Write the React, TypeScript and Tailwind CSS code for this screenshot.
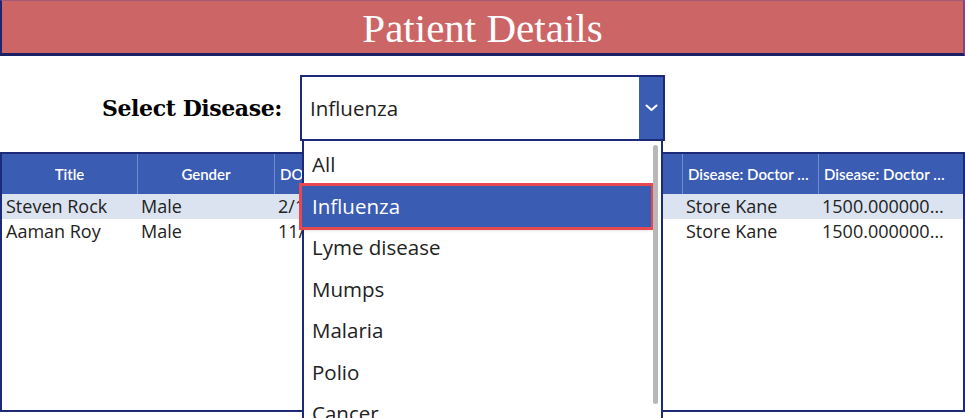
import React from "react";

const cols = ["Title", "Gender", "DOB", "Address", "Phone", "Disease: Doctor Name", "Disease: Doctor Fees", ""];
const rows = [
  ["Steven Rock", "Male", "2/14/1985", "New York", "555-0101", "Store Kane", "1500.000000000", ""],
  ["Aaman Roy", "Male", "11/3/1990", "Chicago", "555-0199", "Store Kane", "1500.000000000", ""],
];
const items = ["All", "Influenza", "Lyme disease", "Mumps", "Malaria", "Polio", "Cancer"];

export default function App() {
  return (
    <div className="relative w-[965px] h-[418px] overflow-hidden bg-white">
      <div className="h-[56px] bg-[#cc6666] border-l-2 border-r-2 border-b-[3px] border-t border-l-[#1d2470] border-r-[#7a4a7a] border-b-[#1b1f66] border-t-[#a25a78] flex items-center justify-center">
        <span className="text-white text-[41px] leading-none pt-[2px]" style={{ fontFamily: '"Liberation Serif", serif' }}>
          Patient Details
        </span>
      </div>

      <div className="flex items-center h-[96px] pt-[8px]">
        <div className="w-[300px] pl-[102px] text-[22px] font-bold text-black" style={{ fontFamily: '"DejaVu Serif", serif', letterSpacing: "-0.4px" }}>
          Select Disease:
        </div>
        <div className="w-[365px] h-[66px] border-2 border-[#1d2a78] flex">
          <div className="flex-1 flex items-center pl-[8px] text-[20.5px] text-[#222]" style={{ fontFamily: '"Open Sans", sans-serif' }}>
            Influenza
          </div>
          <div className="w-[24px] bg-[#3b5cb3] flex items-center justify-center">
            <svg width="13" height="8" viewBox="0 0 13 8" fill="none">
              <path d="M1.5 1.5 L6.5 6 L11.5 1.5" stroke="white" strokeWidth="2" strokeLinecap="round" strokeLinejoin="round" />
            </svg>
          </div>
        </div>
      </div>

      <div className="h-[260px] border-2 border-[#1d2a78] bg-white" style={{ fontFamily: '"Open Sans", sans-serif' }}>
        <div className="grid grid-cols-[135px_137px_136px_136px_136px_136px_136px_1fr] h-[40px] bg-[#3b5cb3]">
          {cols.map((c, i) => (
            <div
              key={i}
              className={`flex items-center px-[5px] text-white text-[15px] font-semibold whitespace-nowrap overflow-hidden ${i < 2 ? "justify-center" : ""} ${i > 0 && i < 7 ? "border-l border-[#6f8ccc]" : ""}`}
              style={{ fontFamily: '"Lato", sans-serif' }}
            >
              <span className="overflow-hidden text-ellipsis">{c}</span>
            </div>
          ))}
        </div>
        {rows.map((r, ri) => (
          <div key={ri} className={`grid grid-cols-[135px_137px_136px_136px_136px_136px_136px_1fr] h-[25px] ${ri === 0 ? "bg-[#dbe2f0]" : "bg-white"}`}>
            {r.map((v, i) => (
              <div key={i} className="flex items-center px-[4px] text-[18px] text-[#222] whitespace-nowrap overflow-hidden">
                <span className="overflow-hidden text-ellipsis">{v}</span>
              </div>
            ))}
          </div>
        ))}
      </div>

      <div className="absolute left-[302px] top-[141px] w-[361px] h-[290px] bg-white border-l-2 border-r-2 border-[#1d2a78] pt-[3px]" style={{ fontFamily: '"Open Sans", sans-serif' }}>
        {items.map((it, i) => (
          <div
            key={i}
            className={`h-[41.5px] flex items-center pl-[8px] text-[20.5px] mr-[10px] ${i === 1 ? "bg-[#3b5cb3] text-white outline outline-[3px] outline-[#e5484f] shadow-[0_2px_4px_rgba(0,0,0,0.3)] relative ml-[-2px] pl-[10px]" : "text-[#222]"}`}
          >
            {it}
          </div>
        ))}
        <div className="absolute right-[3px] top-[4px] w-[5px] h-[259px] bg-[#b8b8b8] rounded-sm" />
      </div>
    </div>
  );
}
